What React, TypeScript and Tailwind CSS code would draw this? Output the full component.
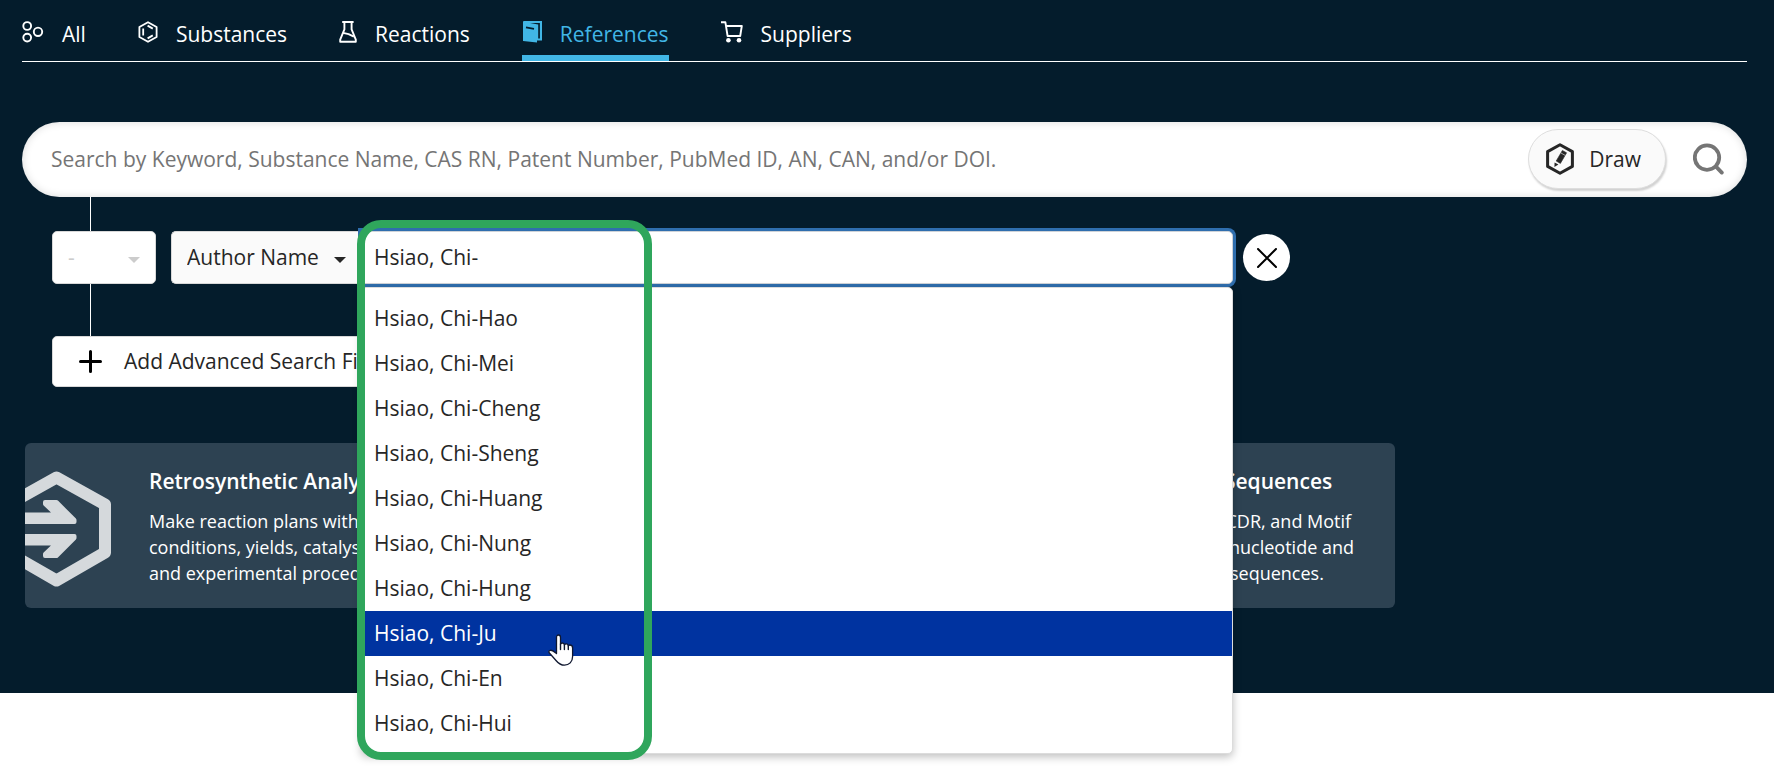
import { useState } from "react";
import type { ReactNode } from "react";

const authors = [
  "Hsiao, Chi-Hao",
  "Hsiao, Chi-Mei",
  "Hsiao, Chi-Cheng",
  "Hsiao, Chi-Sheng",
  "Hsiao, Chi-Huang",
  "Hsiao, Chi-Nung",
  "Hsiao, Chi-Hung",
  "Hsiao, Chi-Ju",
  "Hsiao, Chi-En",
  "Hsiao, Chi-Hui",
];

function AllIcon() {
  return (
    <svg width="22" height="22" viewBox="0 0 22 22" fill="none" stroke="currentColor" strokeWidth="1.9">
      <circle cx="5.2" cy="5" r="3.9" />
      <circle cx="5.2" cy="16.6" r="3.9" />
      <circle cx="16" cy="10.8" r="4.2" />
    </svg>
  );
}

function SubstancesIcon() {
  return (
    <svg width="20" height="22" viewBox="0 0 20 22" fill="none" stroke="currentColor" strokeWidth="1.8" strokeLinejoin="round">
      <path d="M10 1.2 18.6 6v10L10 20.8 1.4 16V6Z" />
      <path d="M5.2 7.6v6.8M9.6 4.6l5.2 3M14.8 14.4l-5.2 3" />
    </svg>
  );
}

function ReactionsIcon() {
  return (
    <svg width="18" height="22" viewBox="0 0 18 22" fill="none" stroke="currentColor" strokeWidth="1.9" strokeLinejoin="round">
      <path d="M3.2 1h11.4M5.4 1v7.4L1.2 18.6V20.8h15.6v-2.2L12.6 8.4V1" />
      <path d="M4 11.8l5.6 1.4 5.2 2.4" />
    </svg>
  );
}

function ReferencesIcon() {
  return (
    <svg width="20" height="22" viewBox="0 0 20 22">
      <path d="M2 0h18v19.4h-5V21.6L1 20V.6Z" fill="currentColor" />
      <path d="M8 1.9h9.9v15.7H16.2V3.4Z" fill="#041c2c" />
      <path d="M4 6.4l8 1.4" stroke="#041c2c" strokeWidth="1.8" />
    </svg>
  );
}

function SuppliersIcon() {
  return (
    <svg width="22" height="22" viewBox="0 0 22 22" fill="none" stroke="currentColor" strokeWidth="1.9" strokeLinejoin="round">
      <path d="M0 1.3h4.4L6.6 15h12.6L20.8 5H5.2" />
      <circle cx="7.4" cy="19.3" r="2.3" fill="currentColor" stroke="none" />
      <circle cx="18" cy="19.3" r="2.3" fill="currentColor" stroke="none" />
    </svg>
  );
}

function DrawIcon() {
  return (
    <svg width="30" height="32" viewBox="0 0 30 32">
      <path d="M15 1.8 27.4 8.6v14.8L15 30.2 2.6 23.4V8.6Z" fill="none" stroke="#262626" strokeWidth="3" strokeLinejoin="round" />
      <path d="M17.4 7.4l4.2 2.4-6.2 10.6-4.2-2.4Z" fill="#262626" stroke="#262626" strokeWidth="0.6" strokeLinejoin="round" />
      <path d="M15.6 9.8l4.6 2.6" stroke="#fafafa" strokeWidth="0.6" />
      <path d="M9.6 19.4l3.8 2.2-4 2.4Z" fill="#262626" />
    </svg>
  );
}

function SearchIcon() {
  return (
    <svg width="31" height="32" viewBox="0 0 31 32" fill="none" stroke="#757575" strokeWidth="3.8" strokeLinecap="round">
      <circle cx="14" cy="14.6" r="12.2" />
      <path d="M23 23.6l5.8 6" />
    </svg>
  );
}

function HandPointer() {
  return (
    <svg width="26" height="32" viewBox="0 0 26 32">
      <path
        d="M8.5 3.4C8.5 1.9 9.4 1 10.5 1S12.5 1.9 12.5 3.4V10.2C12.9 9.3 13.6 9 14.3 9C15.5 9 16.3 9.6 16.4 10.9C16.8 10.2 17.4 9.9 18.1 9.9C19.3 9.9 20.1 10.5 20.3 11.8C20.7 11.2 21.2 11 21.9 11C23.4 11 24.6 12 24.6 14V22.5C24.6 28 21 31.2 16.5 31.2C12.5 31.2 10.5 29.5 8 26.5L1.2 18.8C0.4 17.8 1 16.6 2.3 16.3C3.6 16 5 16.6 8.5 19.6Z"
        fill="white"
        stroke="#101830"
        strokeWidth="1.3"
        strokeLinejoin="round"
      />
      <path d="M12.5 10v5.5M16.4 11v4.5M20.3 12v3.5" stroke="#101830" strokeWidth="1.4" strokeLinecap="round" />
    </svg>
  );
}

function Caret() {
  return (
    <svg width="12" height="6" viewBox="0 0 12 6" className="pointer-events-none">
      <path d="M0 0h12L6 6Z" fill="currentColor" />
    </svg>
  );
}

function RetroIcon() {
  return (
    <svg width="86" height="116" viewBox="0 0 86 116" className="shrink-0">
      <path
        d="M31.5 6.5 80 33.5v48L31.5 109.5-17 81.5v-48Z"
        fill="none"
        stroke="#d5d9dc"
        strokeWidth="12"
        strokeLinejoin="round"
      />
      <g fill="#d5d9dc" stroke="#d5d9dc" strokeWidth="4" strokeLinejoin="round">
        <path d="M-4 43.5H31L20 33V31h11.5L49.5 49v2H-4Z" />
        <path d="M-4 72.5H31L20 83v2h11.5L49.5 67v-2H-4Z" />
      </g>
    </svg>
  );
}

function Tab({ icon, label, active }: { icon: ReactNode; label: string; active?: boolean }) {
  return (
    <a
      href="#"
      aria-current={active ? "page" : undefined}
      className={
        active
          ? "flex h-[61px] gap-[18px] border-b-[6px] border-[#41b6e6] text-[#41b6e6]"
          : "flex h-[61px] gap-[18px] text-white"
      }
    >
      <span className="mt-[21px]">{icon}</span>
      <span className="mt-5 leading-7">{label}</span>
    </a>
  );
}

export default function App() {
  const [query, setQuery] = useState("Hsiao, Chi-");

  return (
    <div className="min-h-screen bg-white font-['Open_Sans',sans-serif] text-[21px] text-[#262626]">
      <main className="bg-[#041c2c] pr-[27px] pb-[85px] pl-[22px]">
        <nav className="flex gap-[52px] border-b border-white">
          <Tab icon={<AllIcon />} label="All" />
          <Tab icon={<SubstancesIcon />} label="Substances" />
          <Tab icon={<ReactionsIcon />} label="Reactions" />
          <Tab icon={<ReferencesIcon />} label="References" active />
          <Tab icon={<SuppliersIcon />} label="Suppliers" />
        </nav>

        <form className="mt-[60px] flex h-[75px] items-center rounded-full bg-white pr-[23px] pb-px pl-[29px] shadow-[inset_0_0_8px_rgba(0,0,0,0.15)]">
          <input
            type="search"
            aria-label="Search"
            placeholder="Search by Keyword, Substance Name, CAS RN, Patent Number, PubMed ID, AN, CAN, and/or DOI."
            className="min-w-0 flex-1 bg-transparent pt-[2px] outline-none placeholder:text-[#757575]"
          />
          <button
            type="button"
            className="flex h-[60px] items-center gap-[14px] rounded-full border border-[#dedede] bg-[#fafafa] pr-6 pl-4 shadow-[1px_2px_2px_rgba(0,0,0,0.18)]"
          >
            <DrawIcon />
            <span className="pt-[2px]">Draw</span>
          </button>
          <button type="submit" aria-label="Run search" className="ml-[27px]">
            <SearchIcon />
          </button>
        </form>

        <section className="relative pl-[30px]">
          <div className="absolute top-0 left-[68px] h-[139px] w-px bg-white" />
          <div className="relative flex max-w-[1238px] items-center pt-[34px]">
            <div className="relative flex h-[53px] w-[104px] items-center rounded-[5px] border border-[#d8d8d8] bg-white text-[#cccccc]">
              <select disabled aria-label="Operator" className="h-full w-full appearance-none pt-px pl-[15px] opacity-100">
                <option>-</option>
              </select>
              <span className="pointer-events-none absolute right-[15px] flex pt-1">
                <Caret />
              </span>
            </div>
            <div className="relative ml-[15px] flex h-[53px] w-[190px] items-center rounded-l-[5px] border border-r-0 border-[#d8d8d8] bg-[#fafafa]">
              <select aria-label="Search field" className="h-full w-full appearance-none pt-px pl-[15px]">
                <option>Author Name</option>
              </select>
              <span className="pointer-events-none absolute right-[15px] flex pt-1">
                <Caret />
              </span>
            </div>
            <div className="relative h-[53px] min-w-0 flex-1">
              <input
                type="text"
                aria-label="Author name"
                value={query}
                onChange={(event) => setQuery(event.target.value)}
                className="h-full w-full rounded-r-[5px] border border-[#cfd3d8] bg-white pb-px pl-3 shadow-[0_0_0_3px_#2f6eae] outline-none"
              />
              <ul
                role="listbox"
                className="absolute top-[56px] right-0 left-0 z-10 rounded-[5px] border border-[#dcdcdc] bg-white pt-2 pb-[7px] shadow-[0_3px_8px_rgba(0,0,0,0.25)]"
              >
                {authors.map((author) => {
                  const selected = author === "Hsiao, Chi-Ju";
                  return (
                    <li
                      key={author}
                      role="option"
                      aria-selected={selected}
                      className={
                        selected
                          ? "relative h-[45px] bg-[#0033a0] pl-3 leading-[44px] text-white"
                          : "h-[45px] pl-3 leading-[44px]"
                      }
                    >
                      {author}
                      {selected && (
                        <span className="absolute top-[23px] left-[186px] z-10">
                          <HandPointer />
                        </span>
                      )}
                    </li>
                  );
                })}
              </ul>
              <div className="pointer-events-none absolute top-[-11px] left-[-4px] z-20 h-[540px] w-[295px] rounded-3xl border-8 border-[#2fa65c]" />
            </div>
            <button
              type="button"
              aria-label="Remove field"
              className="ml-[10px] flex size-[47px] items-center justify-center rounded-full bg-white"
            >
              <svg width="20" height="20" viewBox="0 0 20 20" stroke="black" strokeWidth="2" strokeLinecap="round">
                <path d="M1 1l18 18M19 1L1 19" />
              </svg>
            </button>
          </div>

          <button
            type="button"
            className="relative mt-[52px] flex h-[51px] items-center gap-[22px] rounded-[5px] border border-[#d8d8d8] bg-white pr-6 pb-px pl-[26px]"
          >
            <svg width="23" height="23" viewBox="0 0 23 23" stroke="black" strokeWidth="3" strokeLinecap="round">
              <path d="M11.5 1.5v20M1.5 11.5h20" />
            </svg>
            <span className="pt-[2px]">Add Advanced Search Field</span>
          </button>
        </section>

        <section className="mt-14 ml-[3px] flex max-w-[1370px] justify-between text-lg leading-[26px] text-white">
          <article className="flex h-[165px] rounded-md bg-[#2d4252] pt-6">
            <div className="mt-1">
              <RetroIcon />
            </div>
            <div className="mr-8 ml-[38px]">
              <h2 className="mb-[13px] text-[21px] leading-7 font-semibold">Retrosynthetic Analysis</h2>
              <p>
                Make reaction plans with
                <br />
                conditions, yields, catalysts,
                <br />
                and experimental procedures
              </p>
            </div>
          </article>
          <article className="h-[165px] rounded-md bg-[#2d4252] pt-6 pr-[41px] pl-8">
            <h2 className="mb-[13px] text-[21px] leading-7 font-semibold">Enter Sequences</h2>
            <p>
              BLAST, CDR, and Motif
              <br />
              against nucleotide and
              <br />
              protein sequences.
            </p>
          </article>
        </section>
      </main>
    </div>
  );
}
